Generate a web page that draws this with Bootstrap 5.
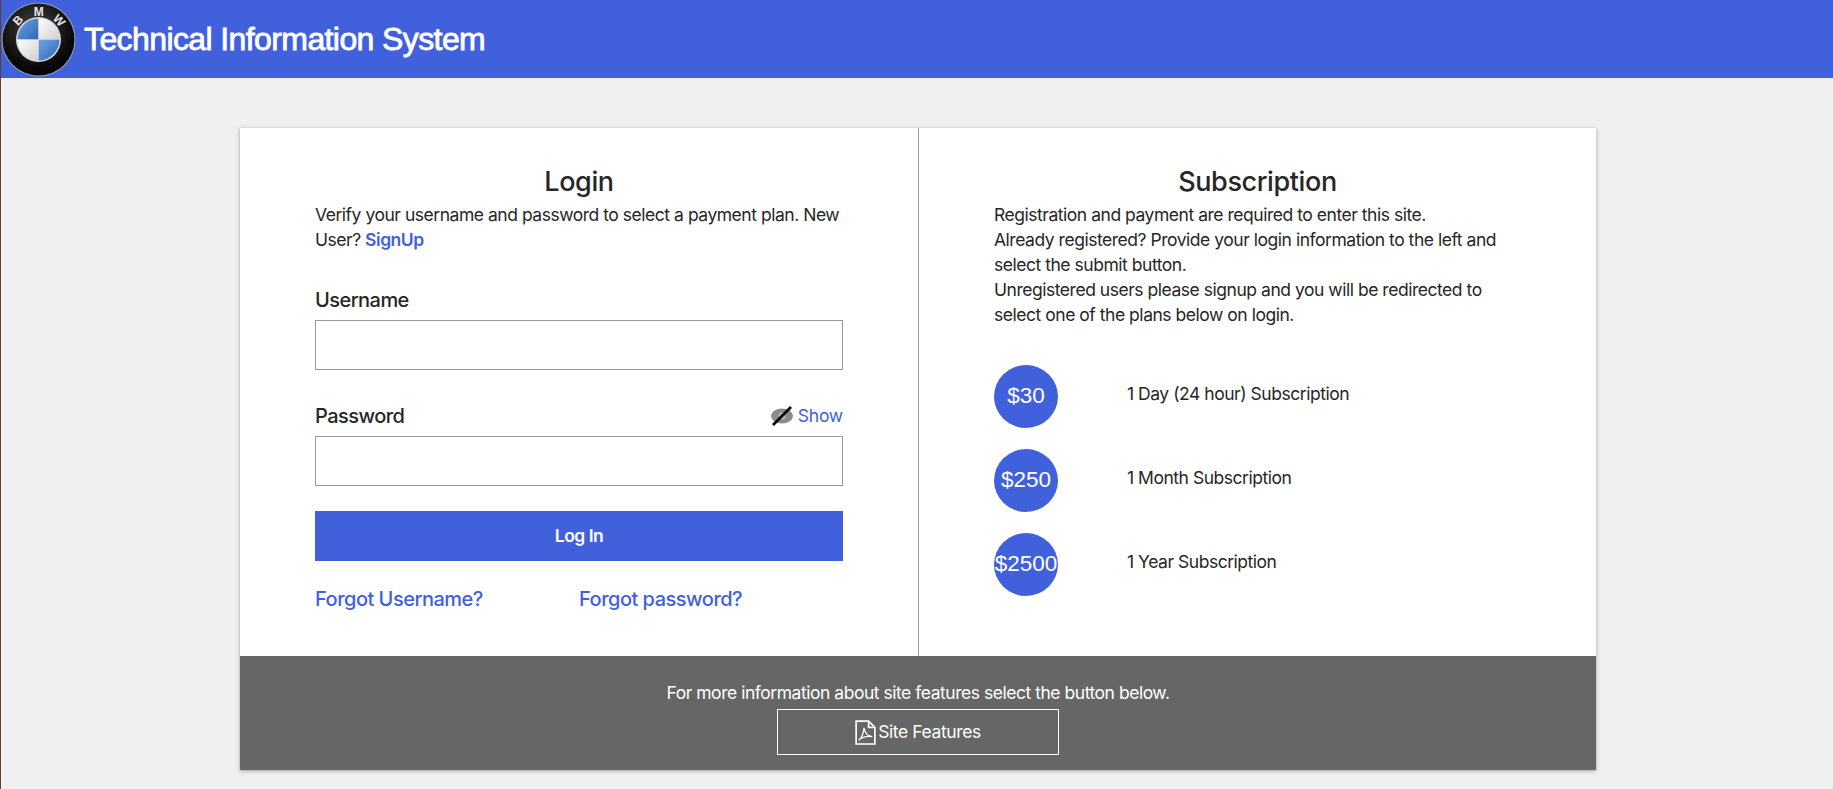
<!DOCTYPE html>
<html lang="en">
<head>
<meta charset="utf-8">
<title>Technical Information System</title>
<link rel="stylesheet" href="https://cdn.jsdelivr.net/npm/bootstrap@5.3.0/dist/css/bootstrap.min.css">
<style>
html,body{height:100%;overflow:hidden}
body{background:#f0f0f0;font-family:Inter,"Liberation Sans",sans-serif;color:#262626;font-size:17.5px;letter-spacing:-.47px;border-left:1px solid #5d3f2e}
.tis-head{height:78px;background:#4160dc;color:#fff}
.tis-logo{width:75px;height:75px;flex:none;margin-top:1px}
.tis-title{font-family:"Liberation Sans",sans-serif;font-size:32px;font-weight:400;letter-spacing:-.6px;-webkit-text-stroke:.8px #fff;margin:0 0 0 8px}
.tis-panel{width:1356px;margin:50px 0 0 239px;background:#fff;box-shadow:0 1px 4px rgba(0,0,0,.35)}
.tis-main{height:528px}
.tis-left{width:679px;padding:37px 75px 0 75px;border-right:1px solid #999}
.tis-right{flex:1;padding:37px 75px 0 75px}
.tis-h{font-size:27px;font-weight:500;line-height:34px;margin:0 0 3px;text-align:center;letter-spacing:-.4px}
.tis-copy{line-height:25px;margin:0}
a.tis-link{color:#4160dc;text-decoration:none}
.tis-label{font-size:20px;font-weight:500;line-height:24px;margin:0;letter-spacing:-.55px}
.tis-user{margin-top:36px;margin-bottom:4px}
.tis-pw{margin-top:34px}
.tis-input{display:block;width:100%;height:50px;border:1px solid #999;border-radius:0;background:#fff;margin-top:8px}
.tis-login{display:block;width:100%;height:50px;margin-top:25px;background:#4160dc;color:#fff;font-weight:600;border:0;border-radius:0;font-size:17.5px;letter-spacing:-.5px}
.tis-links{margin-top:26px}
.tis-forgot{font-size:20px;font-weight:500;letter-spacing:-.5px;line-height:24px}
.tis-show{font-size:17.5px;line-height:24px;letter-spacing:-.2px}
.tis-plans{margin-top:37px;gap:20px}
.tis-plan{height:64px}
.tis-dot{width:64px;height:63px;flex:none;border-radius:50%;background:#4160dc;color:#fff;font-family:"Liberation Sans",sans-serif;font-size:22.5px;letter-spacing:0;display:flex;align-items:center;justify-content:center;white-space:nowrap}
.tis-plan-text{margin-left:69px;margin-top:-3px}
.tis-foot{height:114px;background:#666;color:#fff;padding-top:24px;text-align:center}
.tis-foot p{margin:0;line-height:25px}
.tis-feature{display:flex;width:282px;height:46px;margin:4px auto 0;border:1px solid #fff;color:#fff;align-items:center;justify-content:center;gap:2px;border-radius:0;font-size:17.5px;letter-spacing:-.4px;padding:0}
.tis-feature:hover{color:#fff;border-color:#fff}
</style>
</head>
<body>
<header class="tis-head d-flex align-items-center">
  <svg class="tis-logo" viewBox="0 0 100 100" aria-hidden="true">
    <defs>
      <radialGradient id="rim" cx=".45" cy=".35" r=".75"><stop offset="0" stop-color="#444"/><stop offset=".7" stop-color="#0a0a0a"/><stop offset="1" stop-color="#000"/></radialGradient>
      <linearGradient id="blu" x1="0" y1="0" x2="1" y2="1"><stop offset="0" stop-color="#6ea4e2"/><stop offset="1" stop-color="#2d66b8"/></linearGradient>
      <linearGradient id="whi" x1="0" y1="0" x2="1" y2="1"><stop offset="0" stop-color="#fff"/><stop offset="1" stop-color="#cfcfcf"/></linearGradient>
    </defs>
    <circle cx="50" cy="50" r="49.5" fill="#8f9bb5"/>
    <circle cx="50" cy="50" r="48" fill="url(#rim)"/>
    <circle cx="50" cy="50" r="30" fill="#d8d8d8"/>
    <path d="M50 22 A28 28 0 0 0 22 50 H50Z" fill="url(#blu)"/>
    <path d="M50 78 A28 28 0 0 0 78 50 H50Z" fill="url(#blu)"/>
    <path d="M50 22 A28 28 0 0 1 78 50 H50Z" fill="url(#whi)"/>
    <path d="M50 78 A28 28 0 0 1 22 50 H50Z" fill="url(#whi)"/>
    <g font-family="Liberation Sans, sans-serif" font-size="16" font-weight="700" fill="#e6e6e6" text-anchor="middle">
      <text x="50" y="18" transform="rotate(-47 50 50)">B</text>
      <text x="50" y="18">M</text>
      <text x="50" y="18" transform="rotate(47 50 50)">W</text>
    </g>
  </svg>
  <h1 class="tis-title">Technical Information System</h1>
</header>

<main class="tis-panel">
  <div class="tis-main d-flex">
    <section class="tis-left">
      <h2 class="tis-h">Login</h2>
      <p class="tis-copy">Verify your username and password to select a payment plan. New User? <a class="tis-link fw-semibold" href="#">SignUp</a></p>
      <form>
        <label class="tis-label tis-user d-block" for="u">Username</label>
        <input class="tis-input" id="u" type="text">
        <div class="d-flex justify-content-between align-items-center tis-pw">
          <label class="tis-label" for="p">Password</label>
          <a class="tis-link tis-show d-flex align-items-center gap-1" href="#">
            <svg width="24" height="20" viewBox="0 0 24 20" aria-hidden="true"><ellipse cx="12" cy="10" rx="11" ry="7.5" fill="#8c8c8c"/><ellipse cx="12" cy="10" rx="3.5" ry="3.5" fill="#bbb"/><path d="M3 19 21 1" stroke="#000" stroke-width="2.6"/></svg>Show</a>
        </div>
        <input class="tis-input" id="p" type="password">
        <button class="tis-login" type="button">Log In</button>
        <div class="d-flex tis-links">
          <a class="tis-link tis-forgot w-50" href="#">Forgot Username?</a>
          <a class="tis-link tis-forgot w-50" href="#">Forgot password?</a>
        </div>
      </form>
    </section>
    <section class="tis-right">
      <h2 class="tis-h">Subscription</h2>
      <p class="tis-copy">Registration and payment are required to enter this site.<br>Already registered? Provide your login information to the left and select the submit button.<br>Unregistered users please signup and you will be redirected to select one of the plans below on login.</p>
      <div class="tis-plans d-flex flex-column">
        <div class="tis-plan d-flex align-items-center"><div class="tis-dot">$30</div><div class="tis-plan-text">1 Day (24 hour) Subscription</div></div>
        <div class="tis-plan d-flex align-items-center"><div class="tis-dot">$250</div><div class="tis-plan-text">1 Month Subscription</div></div>
        <div class="tis-plan d-flex align-items-center"><div class="tis-dot">$2500</div><div class="tis-plan-text">1 Year Subscription</div></div>
      </div>
    </section>
  </div>
  <footer class="tis-foot">
    <p>For more information about site features select the button below.</p>
    <a class="btn tis-feature" href="#">
      <svg width="21" height="25" viewBox="0 0 20 24" fill="none" stroke="#fff" stroke-width="1.6" aria-hidden="true"><path d="M1 1H13L19 7V23H1Z"/><path d="M13 1V7H19"/><path d="M3.5 19.5C6 18 8.5 12 8.5 7.5C9.5 12 12 15.5 16.5 16C12 15.5 6.5 16.5 3.5 19.5Z" stroke-width="1.2"/></svg>
      <span>Site Features</span>
    </a>
  </footer>
</main>
<script src="https://cdn.jsdelivr.net/npm/bootstrap@5.3.0/dist/js/bootstrap.bundle.min.js"></script>
</body>
</html>
